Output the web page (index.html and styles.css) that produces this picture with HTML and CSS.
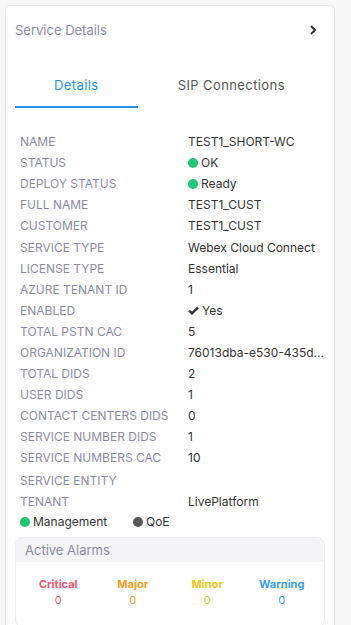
FILE: index.html
```html
<!DOCTYPE html>
<html lang="en">
<head>
    <meta charset="UTF-8">
    <meta name="viewport" content="width=device-width, initial-scale=1.0">
    <title>Service Details</title>
    <link rel="stylesheet" href="styles.css">
</head>
<body>
    <div class="card">
        <div class="card-header">
            <span class="card-title">Service Details</span>
            <svg class="chevron" width="10" height="12" viewBox="0 0 10 12">
                <path d="M3 2 L7 6 L3 10" fill="none" stroke="#333" stroke-width="2"/>
            </svg>
        </div>

        <div class="tabs">
            <div class="tab active">Details</div>
            <div class="tab">SIP Connections</div>
        </div>

        <div class="details">
            <div class="row"><span class="label">NAME</span><span class="value">TEST1_SHORT-WC</span></div>
            <div class="row"><span class="label">STATUS</span><span class="value"><i class="dot green"></i>OK</span></div>
            <div class="row"><span class="label">DEPLOY STATUS</span><span class="value"><i class="dot green"></i>Ready</span></div>
            <div class="row"><span class="label">FULL NAME</span><span class="value">TEST1_CUST</span></div>
            <div class="row"><span class="label">CUSTOMER</span><span class="value">TEST1_CUST</span></div>
            <div class="row"><span class="label">SERVICE TYPE</span><span class="value">Webex Cloud Connect</span></div>
            <div class="row"><span class="label">LICENSE TYPE</span><span class="value">Essential</span></div>
            <div class="row"><span class="label">AZURE TENANT ID</span><span class="value">1</span></div>
            <div class="row">
                <span class="label">ENABLED</span>
                <span class="value">
                    <svg class="check" width="11" height="9" viewBox="0 0 11 9">
                        <path d="M1 4.6 L4 7.4 L10 1.4" fill="none" stroke="#333" stroke-width="2.4"/>
                    </svg>Yes
                </span>
            </div>
            <div class="row"><span class="label">TOTAL PSTN CAC</span><span class="value">5</span></div>
            <div class="row"><span class="label">ORGANIZATION ID</span><span class="value text">76013dba-e530-435d-9a61-2f0c4b7e18aa</span></div>
            <div class="row"><span class="label">TOTAL DIDS</span><span class="value">2</span></div>
            <div class="row"><span class="label">USER DIDS</span><span class="value">1</span></div>
            <div class="row"><span class="label">CONTACT CENTERS DIDS</span><span class="value">0</span></div>
            <div class="row"><span class="label">SERVICE NUMBER DIDS</span><span class="value">1</span></div>
            <div class="row"><span class="label">SERVICE NUMBERS CAC</span><span class="value">10</span></div>
            <div class="row tall"><span class="label">SERVICE ENTITY</span><span class="value"></span></div>
            <div class="row"><span class="label">TENANT</span><span class="value">LivePlatform</span></div>
        </div>

        <div class="legend">
            <span class="legend-item"><i class="dot green"></i>Management</span>
            <span class="legend-item"><i class="dot gray"></i>QoE</span>
        </div>

        <div class="alarms">
            <div class="alarms-header">Active Alarms</div>
            <div class="alarms-body">
                <div class="alarm critical"><b>Critical</b><span>0</span></div>
                <div class="alarm major"><b>Major</b><span>0</span></div>
                <div class="alarm minor"><b>Minor</b><span>0</span></div>
                <div class="alarm warning"><b>Warning</b><span>0</span></div>
            </div>
        </div>
    </div>
</body>
</html>
```

FILE: styles.css
```css
body {
    font-family: Inter, 'Noto Sans', sans-serif;
    background-color: #f7f7f8;
    margin: 0;
    padding: 5px 16px 0 5px;
    height: 100vh;
    box-sizing: border-box;
    overflow: hidden;
}
.card {
    background-color: #fff;
    border: 1px solid #e6e6ea;
    border-radius: 5px;
    padding: 0 9px 0 9px;
    height: 640px;
}
.card-header {
    display: flex;
    justify-content: space-between;
    align-items: center;
    height: 48px;
    padding-right: 7px;
}
.card-title {
    font-size: 13px;
    color: #8b8ba3;
}
.chevron {
    display: block;
}
.tabs {
    display: flex;
    margin-top: 10px;
}
.tab {
    height: 42px;
    display: flex;
    align-items: center;
    justify-content: center;
    font-size: 13px;
    letter-spacing: 0.4px;
    color: #555;
    width: 188px;
}
.tab.active {
    width: 123px;
    color: #2196f3;
    border-bottom: 2px solid #2196f3;
}
.details {
    padding: 23px 0 0 5px;
}
.row {
    display: flex;
    height: 21.1px;
    align-items: center;
    font-size: 12px;
}
.row.tall {
    height: 22px;
    padding-top: 1px;
    box-sizing: border-box;
}
.label {
    width: 168px;
    color: #8b8ba3;
    flex-shrink: 0;
}
.value {
    color: #333;
    white-space: nowrap;
    display: flex;
    align-items: center;
}
.value.text {
    display: block;
    overflow: hidden;
    text-overflow: ellipsis;
    max-width: 136px;
}
.dot {
    display: inline-block;
    width: 10px;
    height: 10px;
    border-radius: 50%;
    margin-right: 3px;
}
.dot.green {
    background-color: #1fc774;
}
.dot.gray {
    background-color: #585858;
}
.check {
    display: block;
    margin-right: 3px;
}
.legend {
    display: flex;
    font-size: 12px;
    color: #333;
    padding-left: 5px;
    height: 20px;
    align-items: center;
}
.legend-item {
    display: flex;
    align-items: center;
    width: 113px;
}
.alarms {
    margin-top: 5px;
    border: 1px solid #ededf0;
    border-radius: 8px;
    overflow: hidden;
}
.alarms-header {
    background-color: #f4f4f6;
    color: #8b8ba3;
    font-size: 13px;
    height: 24px;
    line-height: 24px;
    padding-left: 9px;
}
.alarms-body {
    display: grid;
    grid-template-columns: repeat(4, 1fr);
    padding: 15px 5px 20px;
}
.alarm {
    display: flex;
    flex-direction: column;
    align-items: center;
    font-size: 11px;
}
.alarm b {
    font-weight: 700;
    margin-bottom: 2px;
}
.critical { color: #f2566e; }
.major { color: #ff9a1f; }
.minor { color: #f5c518; }
.warning { color: #3aa0e8; }
```
